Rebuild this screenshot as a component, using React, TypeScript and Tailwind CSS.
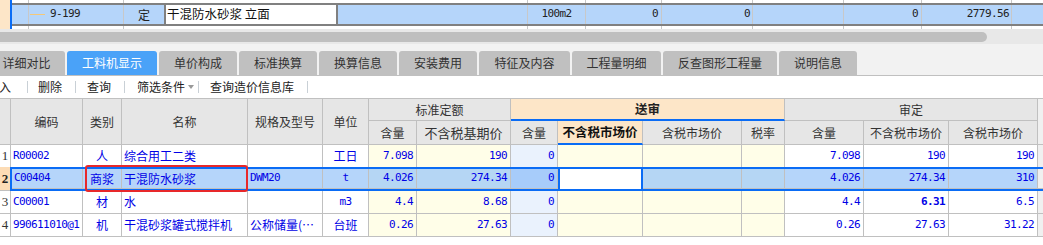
import React from "react";

const CJK = "font-['Noto_Sans_CJK_SC',sans-serif]";
const MONO = "font-['DejaVu_Sans_Mono',monospace] text-[11px] tracking-[-0.6px]";
const GRID = "grid grid-cols-[11px_72px_39px_126px_75px_46px_48px_94px_47px_85px_99px_43px_79px_85px_89px_5px]";
const GRID2 = "grid grid-cols-[71px_39px_126px_75px_46px_48px_94px_47px_85px_99px_43px_79px_85px_89px_5px]";

type Row = {
  n: string; code: string; type: string; name: string; spec: string; specMono?: boolean;
  unit: string; unitMono?: boolean; q: string; base: string; sq: string;
  dq: string; dnt: string; dt: string; bold?: boolean;
};

const rows: Row[] = [
  { n: "1", code: "R00002", type: "人", name: "综合用工二类", spec: "", unit: "工日", q: "7.098", base: "190", sq: "0", dq: "7.098", dnt: "190", dt: "190" },
  { n: "2", code: "C00404", type: "商浆", name: "干混防水砂浆", spec: "DWM20", specMono: true, unit: "t", unitMono: true, q: "4.026", base: "274.34", sq: "0", dq: "4.026", dnt: "274.34", dt: "310" },
  { n: "3", code: "C00001", type: "材", name: "水", spec: "", unit: "m3", unitMono: true, q: "4.4", base: "8.68", sq: "0", dq: "4.4", dnt: "6.31", dt: "6.5", bold: true },
  { n: "4", code: "990611010@1", type: "机", name: "干混砂浆罐式搅拌机", spec: "公称储量(…", unit: "台班", q: "0.26", base: "27.63", sq: "0", dq: "0.26", dnt: "27.63", dt: "31.22" },
];

const tabs = [
  { t: "详细对比", w: "w-[77px] ml-[-12px]" },
  { t: "工料机显示", w: "w-[90px]", active: true },
  { t: "单价构成", w: "w-[78px]" },
  { t: "标准换算", w: "w-[78px]" },
  { t: "换算信息", w: "w-[78px]" },
  { t: "安装费用", w: "w-[78px]" },
  { t: "特征及内容", w: "w-[91px]" },
  { t: "工程量明细", w: "w-[89px]" },
  { t: "反查图形工程量", w: "w-[114px]" },
  { t: "说明信息", w: "w-[78px]" },
];

const topWidths = ["w-[17px]", "w-[95px]", "w-[40px]", "w-[174px]", "w-[190px]", "w-[58px]", "w-[76px]", "w-[91px]", "w-[91px]", "w-[78px]", "w-[90px]", "w-[31px]"];

function Sep({ ml }: { ml: string }) {
  return <div className={`${ml} w-px h-[12px] bg-[#c9d0d6]`} />;
}

function HCell({ children, cls = "" }: { children?: React.ReactNode; cls?: string }) {
  return (
    <div className={`flex items-center justify-center border-r border-b border-[#c0c0c0] text-[12px] text-[#333] ${CJK} ${cls}`}>
      {children}
    </div>
  );
}

export default function App() {
  return (
    <div className="w-[1043px] h-[245px] overflow-hidden bg-white relative">
      {/* top row */}
      <div className="flex h-[29px]">
        <div className="w-[10px] bg-[#fde6c8]" />
        <div className="w-[2px] bg-[#0a6cf5]" />
        <div className="flex-1 flex flex-col">
          <div className="h-[3px] flex">
            {topWidths.map((w, i) => (
              <div key={i} className={`${w} h-full ${i === 2 || i === 3 || i === 11 ? "" : "border-r border-[#c8c8c8]"}`} />
            ))}
          </div>
          <div className="h-[23px] flex border-y-2 border-[#808080] bg-[#b5d5fa]">
            <div className="w-[17px] border-r border-[#c8c8c8]" />
            <div className="w-[95px] border-r border-[#c8c8c8] flex items-center">
              <div className="ml-[1px] w-[15px] h-px bg-[#f5c878]" />
              <span className={`ml-[5px] text-[#222] ${MONO}`}>9-199</span>
            </div>
            <div className={`w-[40px] flex items-center justify-center text-[12px] text-[#222] ${CJK}`}>定</div>
            <div className={`w-[174px] bg-white border-x-2 border-[#808080] flex items-center pl-[1px] text-[12.5px] text-[#111] ${CJK}`}>干混防水砂浆 立面</div>
            <div className="w-[190px] border-r border-[#c8c8c8]" />
            <div className={`w-[58px] border-r border-[#c8c8c8] flex items-center justify-center text-[#222] ${MONO}`}>100m2</div>
            <div className={`w-[76px] border-r border-[#c8c8c8] flex items-center justify-end pr-[3px] text-[#222] ${MONO}`}>0</div>
            <div className={`w-[91px] border-r border-[#c8c8c8] flex items-center justify-end pr-[2px] text-[#222] ${MONO}`}>0</div>
            <div className="w-[91px] border-r border-[#c8c8c8]" />
            <div className={`w-[78px] border-r border-[#c8c8c8] flex items-center justify-end pr-[3px] text-[#222] ${MONO}`}>0</div>
            <div className={`w-[90px] border-r border-[#c8c8c8] flex items-center justify-end pr-[2px] text-[#222] ${MONO}`}>2779.56</div>
            <div className="w-[31px]" />
          </div>
          <div className="h-[3px] flex">
            {topWidths.map((w, i) => (
              <div key={i} className={`${w} h-full ${i === 2 || i === 3 || i === 11 ? "" : "border-r border-[#c8c8c8]"}`} />
            ))}
          </div>
        </div>
      </div>

      {/* horizontal scrollbar */}
      <div className="h-[15px] bg-[#e8e8e8] flex items-center">
        <div className="w-[987px] h-[10px] bg-[#bfbfbf] rounded-r-full" />
      </div>

      {/* tabs */}
      <div className="h-[32px] bg-[#f2f2f2] border-b border-[#c0c0c0] flex items-end gap-[2px] overflow-hidden">
        {tabs.map((t) => (
          <div
            key={t.t}
            className={`${t.w} shrink-0 h-[24px] rounded-t-[3px] flex items-center justify-center text-[12px] ${CJK} ${
              t.active ? "bg-[#4aa2f8] text-white" : "bg-[#c0c0c0] text-[#333]"
            }`}
          >
            {t.t}
          </div>
        ))}
      </div>

      {/* toolbar */}
      <div className={`h-[22px] flex items-center bg-white text-[12px] text-[#222] ${CJK} overflow-hidden`}>
        <span className="ml-[-13px] shrink-0">导入</span>
        <Sep ml="ml-[16px]" />
        <span className="ml-[10px] shrink-0">删除</span>
        <Sep ml="ml-[13px]" />
        <span className="ml-[11px] shrink-0">查询</span>
        <Sep ml="ml-[13px]" />
        <span className="ml-[12px] shrink-0">筛选条件</span>
        <div className="ml-[3px] w-0 h-0 border-x-[3px] border-x-transparent border-t-[4px] border-t-[#999]" />
        <Sep ml="ml-[4px]" />
        <span className="ml-[11px] shrink-0">查询造价信息库</span>
        <Sep ml="ml-[13px]" />
      </div>

      {/* table */}
      <div className="relative">
        {/* header */}
        <div className={`${GRID} grid-rows-[22px_24px] border-t border-[#c0c0c0] bg-[#e6e6e6]`}>
          <HCell cls="row-span-2" />
          <HCell cls="row-span-2">编码</HCell>
          <HCell cls="row-span-2">类别</HCell>
          <HCell cls="row-span-2">名称</HCell>
          <HCell cls="row-span-2">规格及型号</HCell>
          <HCell cls="row-span-2">单位</HCell>
          <HCell cls="col-span-2">标准定额</HCell>
          <div className={`col-span-4 flex items-center justify-center bg-[#fde6c8] border-r border-r-[#c0c0c0] border-b-2 border-b-[#0a6cf5] text-[12.5px] font-bold text-[#222] ${CJK}`}>送审</div>
          <HCell cls="col-span-3">审定</HCell>
          <div className="row-span-2 bg-[#f0f0f0] border-b border-[#c0c0c0]" />
          <HCell>含量</HCell>
          <HCell cls="text-[13px]">不含税基期价</HCell>
          <HCell>含量</HCell>
          <div className={`flex items-center justify-center bg-[#fde6c8] border-r border-r-[#c0c0c0] border-b-2 border-b-[#0a6cf5] text-[12.5px] font-bold text-[#111] ${CJK}`}>不含税市场价</div>
          <HCell>含税市场价</HCell>
          <HCell>税率</HCell>
          <HCell>含量</HCell>
          <HCell>不含税市场价</HCell>
          <HCell>含税市场价</HCell>
        </div>

        {/* data rows */}
        {rows.map((r, idx) => {
          const sel = idx === 1;
          const b = "border-r border-[#c0c0c0]";
          const bb = idx === 0 ? "" : "border-b";
          const blue = "text-[#0000e6]";
          const cjkCell = `flex items-center text-[12px] ${blue} ${CJK}`;
          const numCell = `flex items-center justify-end pr-[3px] ${blue} ${MONO}`;
          const yellow = sel ? "bg-[#b5d6f4]" : "bg-[#fffee8]";
          const lb = sel ? "bg-[#a7ccfa]" : "bg-[#eaf2fd]";
          const cells = (
            <>
              <div className={`${b} ${bb} flex items-center pl-[2px] ${blue} ${MONO}`}>{r.code}</div>
              <div className={`${b} ${bb} ${cjkCell} justify-center`}>{r.type}</div>
              <div className={`${b} ${bb} ${cjkCell} pl-[2px]`}>{r.name}</div>
              <div className={`${b} ${bb} ${r.specMono ? `flex items-center ${blue} ${MONO}` : cjkCell} pl-[2px] overflow-hidden whitespace-nowrap`}>{r.spec}</div>
              <div className={`${b} ${bb} ${r.unitMono ? `flex items-center ${blue} ${MONO}` : cjkCell} justify-center`}>{r.unit}</div>
              <div className={`${b} ${bb} ${yellow} ${numCell}`}>{r.q}</div>
              <div className={`${b} ${bb} ${yellow} ${numCell}`}>{r.base}</div>
              <div className={`${b} ${bb} ${lb} ${numCell}`}>{r.sq}</div>
              {sel ? (
                <div className="bg-white border-x-2 border-[#0a6cf5]" />
              ) : (
                <div className={`${b} ${bb} ${yellow}`} />
              )}
              <div className={`${b} ${bb} ${yellow}`} />
              <div className={`${b} ${bb} ${yellow}`} />
              <div className={`${b} ${bb} ${numCell}`}>{r.dq}</div>
              <div className={`${b} ${bb} ${numCell} ${r.bold ? "font-bold" : ""}`}>{r.dnt}</div>
              <div className={`${b} ${bb} ${numCell}`}>{r.dt}</div>
              <div className={`${bb} border-[#c0c0c0] bg-[#f0f0f0]`} />
            </>
          );
          if (sel) {
            return (
              <div key={r.n} className="flex h-[24px]">
                <div className="w-[10px] bg-[#fcdcb6] border-b border-[#c0c0c0] flex items-center justify-center font-['Liberation_Serif',serif] text-[13px] font-bold text-[#222]">
                  {r.n}
                </div>
                <div className={`${GRID2} flex-1 border-y-2 border-l-2 border-[#0a6cf5] bg-[#b5d5fa]`}>{cells}</div>
              </div>
            );
          }
          return (
            <div key={r.n} className={`${GRID} ${idx === 0 ? "h-[22px]" : "h-[23px]"} bg-white`}>
              <div className={`${b} ${bb} flex items-center justify-center font-['Liberation_Serif',serif] text-[13px] text-[#333]`}>{r.n}</div>
              {cells}
            </div>
          );
        })}

        {/* red highlight */}
        <div className="absolute left-[85px] top-[67px] w-[163px] h-[27px] border-2 border-[#e8282a] rounded-[3px]" />
      </div>
    </div>
  );
}
